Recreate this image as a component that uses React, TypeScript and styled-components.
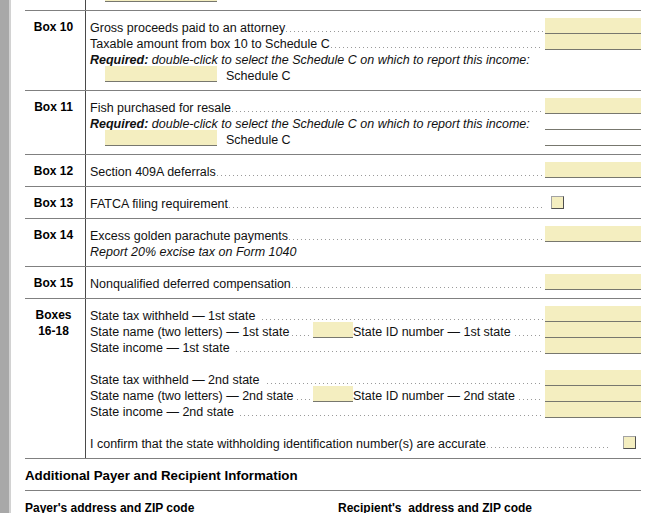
import React from 'react';
import styled, { createGlobalStyle } from 'styled-components';

const GlobalStyle = createGlobalStyle`
  html, body {
    margin: 0;
    padding: 0;
    background: #fff;
  }
  body {
    font-family: "Liberation Sans", Arial, sans-serif;
    font-size: 12.5px;
    color: #111;
  }
`;

const Page = styled.div`
  display: flex;
  height: 513px;
  overflow: hidden;
`;

const SideStrip = styled.div`
  flex: none;
  width: 9px;
  background: #a8a8a8;
  border-right: 2px solid #d2d2d2;
`;

const Sheet = styled.div`
  flex: 1;
  min-width: 0;
  padding: 0 10px 0 14px;
`;

// scrolled so the end of the previous box sits just above the window
const Form = styled.div`
  margin-top: -21px;
`;

const Row = styled.div<{ $first?: boolean }>`
  display: grid;
  grid-template-columns: 61px 1fr;
  border-top: ${({ $first }) => ($first ? 'none' : '1px solid #808080')};
`;

const Label = styled.div`
  box-sizing: border-box;
  border-right: 1px solid #4a4a4a;
  padding: 8px 3px 0 0;
  text-align: center;
  font-weight: bold;
  font-size: 12px;
  line-height: 16px;
  color: #000;
`;

const Body = styled.div`
  min-width: 0;
  padding: 7px 0 8px 4px;
`;

const Line = styled.div`
  display: flex;
  align-items: stretch;
  height: 16px;
  line-height: 16px;
  white-space: nowrap;
`;

const Text = styled.span<{ $italic?: boolean }>`
  flex: none;
  display: block;
  box-sizing: border-box;
  height: 16px;
  padding-top: 2px;
  line-height: 16px;
  font-style: ${({ $italic }) => ($italic ? 'italic' : 'normal')};
  white-space: pre;
`;

const Strong = styled.b`
  font-weight: bold;
`;

const Leader = styled.span<{ $gap?: number; $end?: number }>`
  flex: 1;
  min-width: 0;
  margin: 0 ${({ $end }) => $end ?? 2}px 0 ${({ $gap }) => $gap ?? 1}px;
  background-image: linear-gradient(to right, #9a9a9a 1px, transparent 1px);
  background-size: 4px 1px;
  background-repeat: repeat-x;
  background-position: 0 13px;
`;

const Field = styled.span<{ $w?: number; $blank?: boolean }>`
  flex: none;
  box-sizing: border-box;
  width: ${({ $w }) => $w ?? 96}px;
  height: 16px;
  background: ${({ $blank }) => ($blank ? 'transparent' : '#f4eec0')};
  border-bottom: 1px solid #77776e;
`;

const SchedLine = styled(Line)`
  padding-left: 15px;
  gap: 9px;
`;

// fixed-width lead-in so the small state field lines up in both groups
const NameCell = styled.span`
  flex: none;
  width: 223px;
  display: flex;
`;

const Grow = styled.span`
  flex: 1;
`;

const CheckCell = styled.span`
  flex: none;
  width: 96px;
  display: flex;
  align-items: center;
  padding-left: 6px;
  box-sizing: border-box;
`;

const Check = styled.span<{ $right?: number }>`
  flex: none;
  align-self: center;
  box-sizing: border-box;
  width: 13px;
  height: 13px;
  margin-right: ${({ $right }) => $right ?? 0}px;
  background: #f4eec0;
  border: 1px solid;
  border-color: #a3a3a3 #4f4f4f #4f4f4f #a3a3a3;
`;

const Spacer = styled.div`
  height: 16px;
`;

const SectionTitle = styled.div`
  border-top: 1px solid #808080;
  padding: 9px 0 6px;
  font-weight: bold;
  font-size: 13.3px;
  line-height: 16px;
  color: #000;
`;

const AddressRow = styled.div`
  display: grid;
  grid-template-columns: 313px 1fr;
  border-top: 1px solid #808080;
  padding-top: 9px;
  font-weight: bold;
  font-size: 12px;
  line-height: 16px;
  color: #000;
  white-space: pre;
`;

const Required = () => (
  <Text $italic>
    <Strong>Required:</Strong> double-click to select the Schedule C on which to report this income:
  </Text>
);

const Schedule = () => (
  <SchedLine>
    <Field $w={112} />
    <Text>Schedule C</Text>
  </SchedLine>
);

type Amount = { text: string; gap?: number };

const AmountLine = ({ text, gap }: Amount) => (
  <Line>
    <Text>{text}</Text>
    <Leader $gap={gap} />
    <Field />
  </Line>
);

const StateGroup = ({ nth }: { nth: string }) => (
  <>
    <AmountLine text={`State tax withheld \u2014 ${nth} state`} gap={7} />
    <Line>
      <NameCell>
        <Text>{`State name (two letters) \u2014 ${nth} state`}</Text>
        <Leader $gap={3} />
      </NameCell>
      <Field $w={40} />
      <Text>{`State ID number \u2014 ${nth} state`}</Text>
      <Leader $gap={4} />
      <Field />
    </Line>
    <AmountLine text={`State income \u2014 ${nth} state`} gap={6} />
  </>
);

export default function App() {
  return (
    <>
      <GlobalStyle />
      <Page>
        <SideStrip />
        <Sheet>
          <Form>
            <Row $first>
              <Label />
              <Body>
                <SchedLine>
                  <Field $w={112} />
                </SchedLine>
              </Body>
            </Row>

            <Row>
              <Label>Box 10</Label>
              <Body>
                <AmountLine text="Gross proceeds paid to an attorney" />
                <AmountLine text="Taxable amount from box 10 to Schedule C" />
                <Line>
                  <Required />
                </Line>
                <Schedule />
              </Body>
            </Row>

            <Row>
              <Label>Box 11</Label>
              <Body>
                <AmountLine text="Fish purchased for resale" />
                <Line>
                  <Required />
                  <Grow />
                  <Field $blank />
                </Line>
                <SchedLine>
                  <Field $w={112} />
                  <Text>Schedule C</Text>
                  <Grow />
                  <Field $blank />
                </SchedLine>
              </Body>
            </Row>

            <Row>
              <Label>Box 12</Label>
              <Body>
                <AmountLine text="Section 409A deferrals" />
              </Body>
            </Row>

            <Row>
              <Label>Box 13</Label>
              <Body>
                <Line>
                  <Text>FATCA filing requirement</Text>
                  <Leader />
                  <CheckCell>
                    <Check />
                  </CheckCell>
                </Line>
              </Body>
            </Row>

            <Row>
              <Label>Box 14</Label>
              <Body>
                <AmountLine text="Excess golden parachute payments" />
                <Line>
                  <Text $italic>Report 20% excise tax on Form 1040</Text>
                </Line>
              </Body>
            </Row>

            <Row>
              <Label>Box 15</Label>
              <Body>
                <AmountLine text="Nonqualified deferred compensation" />
              </Body>
            </Row>

            <Row>
              <Label>
                Boxes
                <br />
                16-18
              </Label>
              <Body>
                <StateGroup nth="1st" />
                <Spacer />
                <StateGroup nth="2nd" />
                <Spacer />
                <Line>
                  <Text>I confirm that the state withholding identification number(s) are accurate</Text>
                  <Leader $end={15} />
                  <Check $right={5} />
                </Line>
              </Body>
            </Row>

            <SectionTitle>Additional Payer and Recipient Information</SectionTitle>
            <AddressRow>
              <span>Payer's address and ZIP code</span>
              <span>Recipient's  address and ZIP code</span>
            </AddressRow>
          </Form>
        </Sheet>
      </Page>
    </>
  );
}
